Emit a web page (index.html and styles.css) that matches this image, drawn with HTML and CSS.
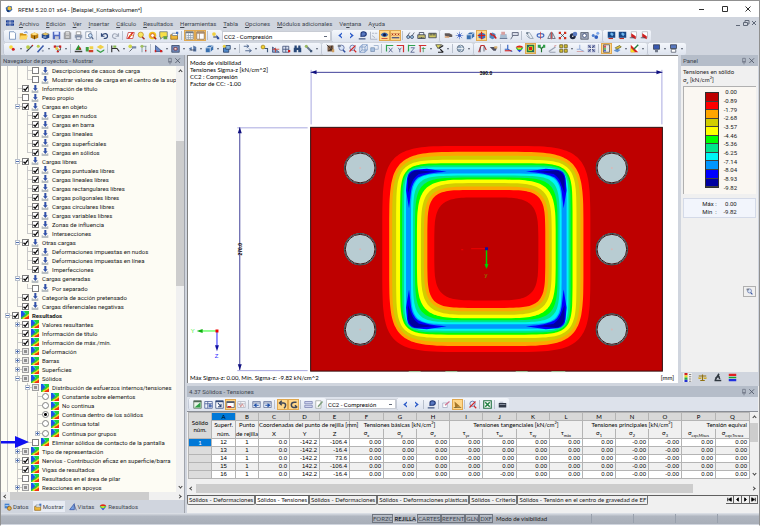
FILE: index.html
```
<!DOCTYPE html>
<html lang="es">
<head>
    <meta charset="UTF-8">
    <meta name="viewport" content="width=device-width, initial-scale=1.0">
    <title>RFEM 5.20.01 x64 - [Beispiel_Kontakvolumen*]</title>
    <link rel="stylesheet" href="styles.css">
</head>
<body>
    <div class="window">
        <header class="titlebar">
            <span class="icon" data-icon="app"></span>
            <h1 class="title">RFEM 5.20.01 x64 - [Beispiel_Kontakvolumen*]</h1>
            <div class="window-buttons">
                <button aria-label="Minimizar"><svg viewBox="0 0 8 8"><path d="M1 4.500h5"/></svg></button>
                <button aria-label="Maximizar"><svg viewBox="0 0 8 8"><path d="M1.500 1.500h5v5h-5z"/></svg></button>
                <button aria-label="Cerrar"><svg viewBox="0 0 8 8"><path d="M1.500 1.500l5 5M6.500 1.500l-5 5"/></svg></button>
            </div>
        </header>

        <nav class="menubar">
            <span class="icon" data-icon="flag"></span>
            <button><u>A</u>rchivo</button>
            <button><u>E</u>dición</button>
            <button><u>V</u>er</button>
            <button><u>I</u>nsertar</button>
            <button><u>C</u>álculo</button>
            <button><u>R</u>esultados</button>
            <button><u>H</u>erramientas</button>
            <button><u>T</u>abla</button>
            <button><u>O</u>pciones</button>
            <button><u>M</u>ódulos adicionales</button>
            <button>Ve<u>n</u>tana</button>
            <button>A<u>y</u>uda</button>
            <div class="mdi-buttons">
                <button aria-label="Minimizar documento"><svg viewBox="0 0 8 8"><path d="M2 6.500h4"/></svg></button>
                <button aria-label="Restaurar documento"><svg viewBox="0 0 8 8"><path d="M1.500 3.500h4v3h-4zM3 3v-1.500h4v3.500h-1"/></svg></button>
                <button aria-label="Cerrar documento"><svg viewBox="0 0 8 8"><path d="M2 2l4 4M6 2l-4 4"/></svg></button>
            </div>
        </nav>

        <div class="toolbar-row">
            <div class="toolbar" data-tools="new open cube box save doc print preview | undo redo | pencil zoom target tip folder | *grid *pane | loadcase"></div>
            <select class="case-select" aria-label="Caso de carga"><option>CC2 - Compresión</option></select>
            <div class="toolbar" data-tools="prev next query dims *eye *xxx | glasses ruler ruler2"></div>
            <div class="toolbar" data-tools="hand star solid *solidred cubered support sign | copy mirror flip cross sphere camera balls"></div>
            <div class="toolbar" data-tools="mod mod pdf pdf"></div>
        </div>
        <div class="toolbar-row">
            <div class="toolbar" data-tools="node. line member. nodes. | tree people layers | frame. tag section | mesh. opening. rod. solid. clip. | arrowsx. key table meshred binoc wrench."></div>
            <div class="toolbar" data-tools="tiger zoomin zoomred wire wire2 | axisx axisy axisz axisall. diag. | orb."></div>
            <div class="toolbar" data-tools="curve mask | axes rainbow *result plant plane eggs. axes2 quad | *legend paint. chart."></div>
            <div class="toolbar" data-tools="screen. screen2."></div>
        </div>

        <main class="workspace">
            <aside class="navigator">
                <div class="dock-header">
                    <h2>Navegador de proyectos - Mostrar</h2>
                    <button aria-label="Fijar" data-icon="pin"></button>
                    <button aria-label="Cerrar navegador" data-icon="close"></button>
                </div>
                <div class="tree-area">
                    <ul class="tree" id="tree"></ul>
                    <div class="scroll-v nav-scroll">
                        <span class="arrow-up"></span>
                        <span class="thumb"></span>
                        <span class="arrow-down"></span>
                    </div>
                </div>
                <div class="scroll-h nav-scroll-h">
                    <span class="arrow-left"></span>
                    <span class="thumb"></span>
                    <span class="arrow-right"></span>
                </div>
                <div class="nav-tabs">
                    <button><span class="icon" data-icon="tabdata"></span>Datos</button>
                    <button class="active"><span class="icon" data-icon="folder"></span>Mostrar</button>
                    <button><span class="icon" data-icon="tabview"></span>Vistas</button>
                    <button><span class="icon" data-icon="rainbow"></span>Resultados</button>
                </div>
                <svg class="pointer" viewBox="0 0 28 12"><path d="M0 5h14V0l14 6-14 6V7.500H0z" fill="#1010f0"/></svg>
            </aside>

            <section class="main">
                <div class="upper">
                    <div class="viewport">
                        <svg class="model" id="model" viewBox="187 55 491 330" role="img" aria-label="Tensiones Sigma-z">
                            <rect x="309" y="127" width="355" height="246" fill="#be0000" stroke="#301010"/>
                            <g id="contours"></g>
                            <g id="holes"></g>
                            <g stroke="#a8a8e0" fill="none">
                                <path d="M309.500 69v55M663.500 69v55M235 127.500h71M235 372.500h71"/>
                            </g>
                            <g stroke="#404098" fill="none">
                                <path d="M309 71.500h355M237.500 127v245"/>
                            </g>
                            <g fill="#101080">
                                <path d="M309 71.500l6-2v4zM664 71.500l-6-2v4zM237.500 127l-2 6h4zM237.500 372l-2-6h4z"/>
                            </g>
                            <text x="486" y="74" class="dim">390.0</text>
                            <text x="0" y="0" class="dim" transform="translate(240 250) rotate(-90)">270.0</text>
                            <path d="M408 373.500h12M445 373.500h12M516 373.500h12M552 373.500h14" stroke="#a0c8a0"/>
                            <!-- origin axes -->
                            <path d="M471 249.500h15" stroke="#f00000"/>
                            <path d="M461 250.500h2" stroke="#f00000"/>
                            <path d="M486.500 250v18" stroke="#00d000" stroke-width="1.500"/>
                            <path d="M484.500 265h4l-2 5z" fill="#00d000"/>
                            <path d="M485 248h3v3h-3z" fill="#1010a0"/>
                            <text x="486" y="278" class="axis" fill="#70a000">y</text>
                            <!-- view axes -->
                            <path d="M198 332.500h17" stroke="#20ff20"/>
                            <path d="M194 332.500l6-2v4z" fill="#10b010"/>
                            <path d="M214.500 333v15" stroke="#2020ff"/>
                            <path d="M214.500 353l-2-6h4z" fill="#1010a0"/>
                            <path d="M213 331h3v3h-3z" fill="#f00000"/>
                            <text x="190" y="335" class="axis" fill="#40f040">Y</text>
                            <text x="214" y="360" class="axis" fill="#3030ff">Z</text>
                        </svg>
                        <div class="model-info">
                            <p>Modo de visibilidad</p>
                            <p>Tensiones Sigma-z [kN/cm^2]</p>
                            <p>CC2 : Compresión</p>
                            <p>Factor de CC: -1.00</p>
                        </div>
                        <div class="model-footer">
                            <span>Máx Sigma-z: 0.00, Mín. Sigma-z: -9.82 kN/cm^2</span>
                            <span>[mm]</span>
                        </div>
                    </div>

                    <aside class="panel">
                        <div class="dock-header">
                            <h2>Panel</h2>
                            <button aria-label="Fijar panel" data-icon="pin"></button>
                            <button aria-label="Cerrar panel" data-icon="close"></button>
                        </div>
                        <div class="panel-body">
                            <p class="panel-title">Tensiones en sólido<br>σ<sub>z</sub> [kN/cm<sup>2</sup>]</p>
                            <div class="legend">
                                <div class="legend-colors" id="legend-colors"></div>
                                <ul class="legend-values" id="legend-values"></ul>
                            </div>
                            <dl class="extremes">
                                <dt>Máx :</dt><dd>0.00</dd>
                                <dt>Mín &nbsp;:</dt><dd>-9.82</dd>
                            </dl>
                            <button class="panel-zoom" aria-label="Opciones" data-icon="zoomin"></button>
                        </div>
                        <div class="panel-tabs">
                            <button class="active" aria-label="Escala" data-icon="scale"></button>
                            <button aria-label="Factores" data-icon="balance"></button>
                            <button aria-label="Filtro" data-icon="micro"></button>
                            <button aria-label="Colores" data-icon="bars"></button>
                        </div>
                    </aside>
                </div>

                <section class="results">
                    <div class="dock-header">
                        <h2>4.37 Sólidos - Tensiones</h2>
                        <button aria-label="Fijar tabla" data-icon="pin"></button>
                        <button aria-label="Cerrar tabla" data-icon="close"></button>
                    </div>
                    <div class="results-tools">
                        <div class="toolbar" data-tools="sheet addrow sheetin *sheetred sheetx | tleft tright | *back *forth | lines edit"></div>
                        <select class="case-select small" aria-label="Caso de carga de la tabla"><option>CC2 - Compresión</option></select>
                        <div class="toolbar" data-tools="prev next | query | clip2 *pick | zoomred | excel | cam"></div>
                    </div>
                    <div class="grid-area">
                        <table class="grid">
                            <colgroup id="cols"></colgroup>
                            <thead id="grid-head"></thead>
                            <tbody id="grid-body"></tbody>
                        </table>
                        <div class="scroll-v grid-scroll">
                            <span class="arrow-up"></span>
                            <span class="thumb"></span>
                            <span class="arrow-down"></span>
                        </div>
                    </div>
                    <div class="scroll-h grid-scroll-h">
                        <span class="arrow-left"></span>
                        <span class="thumb"></span>
                        <span class="arrow-right"></span>
                    </div>
                    <div class="sheet-tabs">
                        <button>Sólidos - Deformaciones</button>
                        <button class="active">Sólidos - Tensiones</button>
                        <button>Sólidos - Deformaciones</button>
                        <button>Sólidos - Deformaciones plásticas</button>
                        <button>Sólidos - Criterio</button>
                        <button>Sólidos - Tensión en el centro de gravedad de EF</button>
                        <div class="sheet-nav">
                            <button aria-label="Primera"><svg viewBox="0 0 8 8"><path d="M2 2v4M6 2L3 4l3 2z"/></svg></button>
                            <button aria-label="Anterior"><svg viewBox="0 0 8 8"><path d="M5 2L3 4l2 2z"/></svg></button>
                            <button aria-label="Siguiente"><svg viewBox="0 0 8 8"><path d="M3 2l2 2-2 2z"/></svg></button>
                            <button aria-label="Última"><svg viewBox="0 0 8 8"><path d="M6 2v4M2 2l3 2-3 2z"/></svg></button>
                        </div>
                    </div>
                </section>
            </section>
        </main>

        <footer class="statusbar">
            <button>FORZC</button>
            <button class="on">REJILLA</button>
            <button>CARTES</button>
            <button>REFENT</button>
            <button>GLN</button>
            <button>DXF</button>
            <span class="status-text">Modo de visibilidad</span>
            <span class="cell"></span>
            <span class="cell"></span>
            <span class="cell"></span>
            <span class="cell"></span>
        </footer>
    </div>
    <script src="script.js"></script>
</body>
</html>
```
FILE: styles.css
```
:root {
    --ui-font: Roboto, "Open Sans", sans-serif;
    --grid-font: Lato, "Liberation Sans", sans-serif;
    --frame: #d0d5de;
    --dock: #b5bdc9;
    --line: #a0a4ac;
    --text: #202020;
}

* {
    margin: 0;
    padding: 0;
    box-sizing: border-box;
}

body {
    font-family: var(--ui-font);
    font-size: 6px;
    line-height: 9px;
    color: var(--text);
    background: #ffffff;
}

button,
select {
    font: inherit;
    color: inherit;
    background: none;
    border: 0;
}

svg {
    display: block;
}

ul {
    list-style: none;
}

h1,
h2 {
    font-size: inherit;
    font-weight: normal;
}

.window {
    display: flex;
    flex-direction: column;
    height: 100vh;
    padding-bottom: 1px;
    background: var(--frame);
    border-top: 1px solid #909090;
    border-right: 1px solid #909090;
    border-left: 1px solid #909090;
    border-bottom: 1px solid #ffffff;
    overflow: hidden;
}

/* title and menu */
.titlebar {
    display: flex;
    align-items: center;
    gap: 5px;
    height: 16px;
    padding: 0 3px 0 4px;
    background: #ffffff;
    flex: none;
}

.icon {
    display: block;
    width: 8px;
    height: 8px;
    flex: none;
}

.icon svg,
[data-icon] > svg {
    width: 100%;
    height: 100%;
}

.window-buttons {
    display: flex;
    gap: 15px;
    margin-left: auto;
    padding-right: 4px;
}

.window-buttons svg,
.mdi-buttons svg {
    width: 8px;
    height: 8px;
    fill: none;
    stroke: #303030;
}

.mdi-buttons svg {
    stroke: #606878;
}

.menubar {
    display: flex;
    align-items: center;
    gap: 7px;
    height: 12px;
    padding-left: 5px;
    color: #404650;
    flex: none;
}

.menubar > .icon {
    margin-right: -2px;
}

.mdi-buttons {
    display: flex;
    margin-left: auto;
    padding-right: 1px;
}

/* toolbars */
.toolbar-row {
    display: flex;
    align-items: center;
    height: 13px;
    padding-left: 2px;
    flex: none;
}

.toolbar {
    display: flex;
    align-items: center;
    height: 12px;
    padding: 0 1px 0 3px;
    background: linear-gradient(#f4f7fc, #dde3ee);
    border-left: 1px dotted #a0a8b8;
    border-radius: 2px;
}

.tool {
    display: flex;
    align-items: center;
    justify-content: center;
    width: 11px;
    height: 11px;
}

.tool svg {
    width: 9px;
    height: 9px;
}

.tool.on {
    background: #ffd78a;
    outline: 1px solid #e0a850;
    outline-offset: -1px;
}

.tool-drop {
    width: 6px;
    height: 11px;
    display: flex;
    align-items: center;
    justify-content: center;
}

.tool-drop::before {
    content: "";
    border: 1px solid transparent;
    border-top: 2px solid #505868;
    border-bottom: 0;
}

.tool-sep {
    width: 1px;
    height: 9px;
    margin: 0 2px 0 1px;
    background: #b8c0cc;
}

.case-select {
    width: 109px;
    height: 10px;
    padding: 0 8px 0 1px;
    background: linear-gradient(#606878, #606878) calc(100% - 3px) 4px / 3px 1px no-repeat #ffffff;
    border: 1px solid #c8ccd4;
    appearance: none;
    color: #000000;
}

.case-select.small {
    width: 70px;
}

/* docks */
.workspace {
    display: grid;
    grid-template-columns: 184px 1fr;
    gap: 2px;
    flex: 1;
    min-height: 0;
}

.dock-header {
    display: flex;
    align-items: center;
    height: 11px;
    padding: 0 2px;
    background: var(--dock);
    color: #404650;
    flex: none;
}

.dock-header h2 {
    flex: 1;
}

.dock-header button {
    width: 8px;
    height: 8px;
}

.navigator {
    position: relative;
    display: flex;
    flex-direction: column;
    min-height: 0;
    background: #fdfcf4;
    border-right: 1px solid var(--line);
}

.tree-area {
    display: flex;
    flex: 1;
    min-height: 0;
}

.tree {
    display: flex;
    flex-direction: column;
    flex: 1;
    min-width: 0;
    padding-left: 1px;
    overflow: hidden;
}

.tree-row {
    display: flex;
    align-items: center;
    flex: 1;
    min-height: 0;
    white-space: nowrap;
}

.guide {
    position: relative;
    width: 10px;
    align-self: stretch;
    flex: none;
}

.guide.line,
.guide.branch {
    background: linear-gradient(#c8c8c8, #c8c8c8) 5px 0 / 1px 100% no-repeat;
}

.guide.branch {
    background:
        linear-gradient(#c8c8c8, #c8c8c8) 5px 0 / 1px 100% no-repeat,
        linear-gradient(#c8c8c8, #c8c8c8) 5px 4px / 5px 1px no-repeat;
}

.guide.last {
    background:
        linear-gradient(#c8c8c8, #c8c8c8) 5px 0 / 1px 5px no-repeat,
        linear-gradient(#c8c8c8, #c8c8c8) 5px 4px / 5px 1px no-repeat;
}

/* expander box sits on top of the guide line */
.expander {
    position: absolute;
    left: 3px;
    top: 2px;
    width: 5px;
    height: 5px;
    border: 1px solid #b8c0cc;
    background: linear-gradient(#5070b0, #5070b0) center / 3px 1px no-repeat #ffffff;
}

.expander.plus {
    background:
        linear-gradient(#5070b0, #5070b0) center / 3px 1px no-repeat,
        linear-gradient(#5070b0, #5070b0) center / 1px 3px no-repeat #ffffff;
}

.tree-row label {
    display: flex;
    align-items: center;
    gap: 2px;
}

.tree-row .icon {
    width: 8px;
    margin-right: 1px;
}

.tree-row input {
    appearance: none;
    width: 7px;
    height: 7px;
    border: 1px solid #808080;
    background: #ffffff;
    flex: none;
}

.tree-row input[type="checkbox"]:checked {
    background: #ffffff url("data:image/svg+xml,%3Csvg xmlns='http://www.w3.org/2000/svg' viewBox='0 0 6 6'%3E%3Cpath d='M1 3l1.500 1.500L5 1' fill='none' stroke='%23000' stroke-width='1.200'/%3E%3C/svg%3E") center / 6px 6px no-repeat;
}

.tree-row input.mixed {
    background: #909090;
    border-color: #a0a0a0;
    box-shadow: inset 0 0 0 1px #e8e8e8;
}

.tree-row input[type="radio"] {
    border-radius: 50%;
}

.tree-row input[type="radio"]:checked {
    background: radial-gradient(circle, #000000 0 1px, #ffffff 2px);
}

.tree-row.bold {
    font-weight: bold;
}

.scroll-v,
.scroll-h {
    display: flex;
    align-items: center;
    background: #f0f0f0;
    flex: none;
}

.scroll-v {
    flex-direction: column;
    width: 8px;
}

.scroll-h {
    height: 8px;
}

.thumb {
    background: #cdcdcd;
}

.scroll-v .thumb {
    width: 100%;
}

.scroll-h .thumb {
    height: 100%;
}

.arrow-up,
.arrow-down,
.arrow-left,
.arrow-right {
    width: 3px;
    height: 3px;
    margin: 4px 3px;
    border: solid #404040;
    border-width: 1px 0 0 1px;
    flex: none;
    transform: rotate(45deg);
}

.arrow-down {
    transform: rotate(225deg);
    margin-top: auto;
}

.arrow-left {
    transform: rotate(-45deg);
}

.arrow-right {
    transform: rotate(135deg);
    margin-left: auto;
}

.nav-scroll .thumb {
    height: 34%;
    margin-top: 64px;
}

.nav-scroll-h .thumb {
    width: 76%;
}

.nav-tabs {
    display: flex;
    align-items: center;
    gap: 3px;
    height: 13px;
    padding-left: 2px;
    background: var(--frame);
    color: #404650;
    flex: none;
}

.nav-tabs button {
    display: flex;
    align-items: center;
    gap: 1px;
    height: 11px;
    padding: 0 1px;
}

.nav-tabs .active {
    background: #e8ecf4;
}

.pointer {
    position: absolute;
    left: 0;
    bottom: 65px;
    width: 28px;
    height: 12px;
}

.main {
    display: flex;
    flex-direction: column;
    min-width: 0;
    min-height: 0;
}

.upper {
    display: grid;
    grid-template-columns: 1fr 77px;
    gap: 3px;
    flex: 1;
    min-height: 0;
    padding-right: 1px;
}

/* model view */
.viewport {
    position: relative;
    min-height: 0;
    background: #ffffff;
    border-top: 1px solid #808080;
    border-left: 1px solid #808080;
    font-family: var(--grid-font);
    color: #000000;
}

.model {
    position: absolute;
    width: 100%;
    height: 100%;
}

.model text {
    font-family: "Liberation Sans", sans-serif;
    font-size: 6px;
    text-anchor: middle;
}

.model .dim {
    font-size: 5px;
    font-weight: bold;
    fill: #000000;
}

.model-info {
    position: absolute;
    top: 3px;
    left: 2px;
    font-size: 6px;
    line-height: 7px;
}

.model-footer {
    position: absolute;
    right: 4px;
    bottom: 1px;
    left: 2px;
    display: flex;
    justify-content: space-between;
    font-size: 6px;
    line-height: 8px;
}

/* right panel */
.panel {
    display: flex;
    flex-direction: column;
    min-height: 0;
    background: #f0f0f0;
}

.panel-body {
    display: flex;
    flex-direction: column;
    flex: 1;
    padding: 2px;
    min-height: 0;
}

.panel-title {
    padding-bottom: 1px;
    font-family: var(--grid-font);
    line-height: 8px;
}

.panel-title sub,
.panel-title sup {
    font-size: 4px;
    line-height: 1;
}

.legend {
    display: flex;
    gap: 2px;
    height: 108px;
    padding: 5px 0 0 21px;
    background: #faf7f2;
    border-top: 1px solid #b0b0b0;
    border-left: 1px solid #b0b0b0;
}

.legend-colors {
    width: 14px;
    height: 96px;
    border: 1px solid #303030;
}

.legend-colors span {
    display: block;
    height: calc(100% / 11);
    border-bottom: 1px solid #404040;
}

.legend-values {
    width: 16px;
    height: 104px;
    margin-top: -4px;
    text-align: right;
    display: flex;
    flex-direction: column;
}

.legend-values li {
    flex: 1;
    line-height: 8px;
}

.extremes {
    display: grid;
    grid-template-columns: auto 20px;
    justify-content: center;
    margin: 4px 0 68px;
    padding: 1px 0;
    background: #f2f5fc;
    border: 1px solid #d4dae8;
    line-height: 8px;
}

.extremes dd {
    text-align: right;
}

.panel-zoom {
    width: 13px;
    height: 11px;
    padding: 1px 2px;
    align-self: flex-end;
    border: 1px solid #b0b0b0;
}

.panel-tabs {
    display: flex;
    gap: 6px;
    height: 11px;
    padding: 1px 2px;
    background: var(--frame);
    flex: none;
}

.panel-tabs button {
    width: 9px;
    height: 9px;
}

.panel-tabs .active {
    background: #f0f0f0;
}

/* result table */
.results {
    margin-top: 3px;
    padding-right: 1px;
    background: #f0f0f0;
    flex: none;
}

.results-tools {
    display: flex;
    align-items: center;
    height: 15px;
    padding-left: 1px;
    background: #dde2eb;
    border-bottom: 1px solid #8a8e96;
}

.grid-area {
    display: flex;
    padding-left: 1px;
}

.grid {
    flex: 1;
    width: 100%;
    min-width: 0;
    table-layout: fixed;
    border-collapse: collapse;
    font-family: "Liberation Sans", sans-serif;
    font-size: 6px;
    line-height: 7px;
    color: #000000;
}

.grid th,
.grid td {
    height: 8px;
    padding: 0;
    border: 1px solid #b4b4b4;
    white-space: nowrap;
    font-weight: normal;
    text-align: center;
}

.grid th {
    background: #f0f0f0;
    font-family: var(--grid-font);
}

.grid .letters th {
    background: #d8d8d8;
}

.grid .letters .current,
.grid tbody .current {
    background: #0078d7;
    color: #ffffff;
}

.grid .letters .current {
    color: #000000;
}

.grid .names th {
    height: 10px;
    border-top: 0;
}

.grid .groups th {
    border-bottom: 0;
}

.grid tbody th {
    background: #dcdcdc;
}

.grid td {
    background: #ffffff;
}

.grid tr:nth-child(even) td {
    background: #f0f0f0;
}

.grid .num {
    padding-right: 2px;
    text-align: right;
}

.grid sub,
.grid sup {
    font-size: 4px;
    line-height: 1;
}

.grid-scroll .thumb {
    height: 19px;
}

.grid-scroll-h {
    margin-top: 5px;
    height: 9px;
}

.grid-scroll-h .thumb {
    width: 87%;
}

.sheet-tabs {
    display: flex;
    align-items: flex-start;
    margin-top: 2px;
    height: 18px;
    border-top: 1px solid #606060;
    font-family: var(--grid-font);
}

.sheet-tabs > button {
    height: 9px;
    padding: 0 1px;
    border: 1px solid #707070;
    border-top: 0;
    border-radius: 0 0 2px 2px;
    line-height: 8px;
    white-space: nowrap;
}

.sheet-tabs > .active {
    background: #ffffff;
}

.sheet-nav {
    display: flex;
    margin-left: auto;
}

.sheet-nav button {
    border-right: 1px solid #606060;
    border-bottom: 1px solid #606060;
}

.sheet-nav svg {
    width: 7px;
    height: 7px;
    stroke: #000000;
}

/* status */
.statusbar {
    display: flex;
    align-items: center;
    height: 11px;
    padding-left: 371px;
    background: linear-gradient(#e0e4ea, #b0b6c0 30%, #a8aeb8);
    font-family: var(--grid-font);
    flex: none;
}

.statusbar button {
    height: 9px;
    border: 1px solid #707680;
    line-height: 7px;
    color: #404650;
}

.statusbar .on {
    color: #000000;
    border-color: #c8ccd4;
}

.status-text {
    width: 98px;
    padding-left: 3px;
    white-space: nowrap;
}

.cell {
    flex: 1;
    height: 9px;
    border-left: 1px solid #98a0ac;
}
```
FILE: script.js
```
// Small icon set, every icon is drawn on a 12x12 canvas
const ICONS = {
    app: '<path d="M1 4l4-3 5 1 1 5-4 4-5-2z" fill="#3a6ab0"/><path d="M4 3l3-1 3 3-2 3-4-1z" fill="#f0c030"/><path d="M3 7l3 1v3l-3-1z" fill="#183870"/>',
    flag: '<path d="M0 2h12v8H0z" fill="#1c3c90"/><path d="M0 6h12M6 2v8" stroke="#fff"/><path d="M2 4h2M8 4h2M2 8h2M8 8h2" stroke="#80a0e0"/>',
    pin: '<path d="M4 2h4v5H4zM3 7.500h6M6 8v3" fill="none" stroke="#606878"/>',
    close: '<path d="M2 2l7 7M9 2l-7 7" stroke="#505868" stroke-width="1.300"/>',
    new: '<path d="M2 1h6l2 2v8H2z" fill="#fff" stroke="#6080b0"/>',
    open: '<path d="M1 3h4l1 1h4v7H1z" fill="#d09010"/><path d="M2 6h10l-2 5H1z" fill="#ffd860"/><path d="M7 2l3-1 1 2" stroke="#3060b0" fill="none"/>',
    cube: '<path d="M1 4l5-2 5 2v5l-5 2-5-2z" fill="#c08010"/><path d="M1 4l5-2 5 2-5 2z" fill="#ffe080"/><path d="M6 6v5" stroke="#403000"/>',
    box: '<path d="M1 4l5-2 5 2v5l-5 2-5-2z" fill="#204890"/><path d="M1 4l5-2 5 2-5 2z" fill="#e0c060"/><path d="M3 8h4" stroke="#fff"/>',
    save: '<path d="M1 1h10v10H1z" fill="#5068c0"/><path d="M3 1h6v4H3z" fill="#e0e8ff"/><path d="M4 7h5v4H4z" fill="#c8c8d0"/>',
    doc: '<path d="M1 2h10v9H1z" fill="#a0a4ac"/><path d="M3 1h6v9H3z" fill="#eee" stroke="#808080"/><path d="M4 4h4M4 6h4M4 8h4" stroke="#909090"/>',
    print: '<path d="M3 1h6v4H3z" fill="#fff" stroke="#888"/><path d="M1 5h10v4H1z" fill="#909cb0"/><path d="M3 8h6v3H3z" fill="#fff" stroke="#607090"/>',
    preview: '<path d="M1 1h7v9H1z" fill="#fff" stroke="#8090a8"/><circle cx="7" cy="6" r="2.500" fill="#d0e8ff" stroke="#405880"/><path d="M9 8l2 3" stroke="#405880" stroke-width="1.500"/>',
    undo: '<path d="M2 3v4h4M2 7c3-5 8-4 8 0 0 2-2 3-5 3" fill="none" stroke="#304878" stroke-width="1.600"/>',
    redo: '<path d="M10 3v4H6M10 7c-3-5-8-4-8 0 0 2 2 3 5 3" fill="none" stroke="#a0a8b8" stroke-width="1.500"/>',
    pencil: '<path d="M3 2h8l-2 8H1z" fill="#fff" stroke="#c03030"/><path d="M3 10l6-8" stroke="#e03020" stroke-width="2"/><path d="M4 6h5" stroke="#e0a020"/>',
    zoom: '<circle cx="5" cy="5" r="3.500" fill="#f8e860" stroke="#c08820"/><path d="M7 8l3 3" stroke="#a03020" stroke-width="2"/>',
    target: '<circle cx="6" cy="6" r="5" fill="#f0c020"/><circle cx="6" cy="6" r="2.500" fill="#fff" stroke="#d05020"/><path d="M8 8l3 3" stroke="#b02020" stroke-width="2"/>',
    tip: '<path d="M1 1h10v7H5l-3 3V8H1z" fill="#f8e048" stroke="#607080"/><path d="M6 7h5v4H6z" fill="#60a040"/>',
    folder: '<path d="M1 5h9v6H1z" fill="#f0b838" stroke="#906010"/><path d="M3 3h7v3H3z" fill="#fff" stroke="#708090"/><path d="M8 1h3v3H8z" fill="#4070c0"/>',
    grid: '<path d="M1 1h10v10H1z" fill="#fff" stroke="#707880"/><path d="M1 2h10" stroke="#707880" stroke-width="2"/><path d="M4.500 3v8M7.500 3v8M2 6h9M2 8.500h9" stroke="#90a0b0"/>',
    pane: '<path d="M1 1h10v10H1z" fill="#fff" stroke="#806040"/><path d="M1 2.500h10" stroke="#a08060" stroke-width="2"/><path d="M4.500 3v8" stroke="#a08060"/>',
    loadcase: '<circle cx="4" cy="4" r="2.500" fill="#f0d040"/><path d="M3 8h6" stroke="#404858" stroke-width="1.500"/><path d="M7 5l4 4v2H8z" fill="#3050a0"/>',
    prev: '<path d="M8 2L3 6l5 4V8L6 6l2-2z" fill="#2858c8"/>',
    next: '<path d="M4 2l5 4-5 4V8l2-2-2-2z" fill="#2858c8"/>',
    query: '<path d="M4 8V4q0-3 3-3 4 0 4 3t-4 3H5" fill="#5878c0" stroke="#203878" stroke-width="1.500"/><path d="M1 10.500h9" stroke="#304878" stroke-width="1.500"/>',
    dims: '<path d="M2 1v10h9M4 3h3M8 3h3M4 6l4 3" stroke="#a0a8b8" fill="none"/>',
    eye: '<path d="M1 5c3-4 7-4 10 0-3 4-7 4-10 0z" fill="#3868b0"/><circle cx="6" cy="5" r="2" fill="#101840"/><path d="M2 10h8" stroke="#c03020"/>',
    xxx: '<path d="M1 3l2 3M3 3L1 6M5 3l2 3M7 3L5 6M9 3l2 3M11 3L9 6" stroke="#a02010"/><path d="M1 9h10" stroke="#304080" stroke-width="1.500"/>',
    glasses: '<path d="M1 8l4-6M7 8l4-6" stroke="#404858"/><circle cx="3" cy="8" r="2" fill="#a0c8e8" stroke="#304060"/><circle cx="8" cy="8" r="2" fill="#a0c8e8" stroke="#304060"/>',
    ruler: '<path d="M1 5h10v5H1z" fill="#c8c070" stroke="#303850"/><path d="M3 5V2h6v3M4 8v2M6 8v2M8 8v2" stroke="#303850" fill="none"/>',
    ruler2: '<path d="M1 3h10v6H1z" fill="#d0c860" stroke="#303850"/><path d="M3 3v3M5 3v3M7 3v3M9 3v3" stroke="#303850"/>',
    hand: '<path d="M1 3h6l4 2v3H5L1 6z" fill="#605858"/><path d="M1 8h6" stroke="#d8a070" stroke-width="2"/>',
    star: '<path d="M6 1v10M1 6h10M2.500 2.500l7 7M9.500 2.500l-7 7" stroke="#6888d0"/><circle cx="6" cy="6" r="2" fill="#4060c0"/>',
    solid: '<path d="M1 5l4-3h6v5l-4 4H1z" fill="#3870b0"/><path d="M1 5h6v6M7 5l4-3" stroke="#fff" fill="none"/>',
    solidred: '<path d="M2 4l4-2 5 2v5l-4 2-5-2z" fill="#4068b8"/><path d="M6 1v10M1 6h10" stroke="#d02020" stroke-width="1.500"/>',
    cubered: '<path d="M2 4l4-2 4 2v5l-4 2-4-2z" fill="#5088c0"/><path d="M7 5l4 5M3 3l3 3" stroke="#d02020" stroke-width="2"/>',
    support: '<path d="M2 4h8l1 6H1z" fill="#a8bcd0"/><path d="M3 1h5v4H3z" fill="#d8a0a0"/><path d="M1 10h10" stroke="#506080"/>',
    sign: '<path d="M3 2h8v4H3z" fill="#d8dce8" stroke="#485068"/><path d="M4 6l-3 5" stroke="#485068"/>',
    copy: '<path d="M2 2h4l5 8H7zM2 6l4 4" fill="none" stroke="#8898a8"/><circle cx="3" cy="3" r="1.500" fill="#708090"/>',
    mirror: '<ellipse cx="6" cy="6" rx="4.500" ry="2.500" fill="none" stroke="#4068c0" stroke-width="1.500"/><path d="M6 1v10" stroke="#d04040"/>',
    flip: '<path d="M5 2v8H1zM7 2v8h4z" fill="#e8e8f0" stroke="#505868"/><path d="M6 1v10" stroke="#d03030"/>',
    cross: '<path d="M2 2l8 8M10 2l-8 8" stroke="#404040"/><path d="M1 1h3v3H1zM8 1h3v3H8zM1 8h3v3H1zM8 8h3v3H8z" fill="#d03020"/>',
    sphere: '<circle cx="5" cy="7" r="4" fill="#202840"/><circle cx="8" cy="4" r="3" fill="#5878c0"/><circle cx="5" cy="7" r="1" fill="#fff"/>',
    camera: '<path d="M1 2h10v9H1z" fill="#a0a8b8" stroke="#505868"/><circle cx="6" cy="6" r="2.500" fill="#fff" stroke="#304070"/>',
    balls: '<circle cx="3" cy="6" r="2" fill="#5080d0"/><circle cx="7" cy="8" r="2.500" fill="#3060c0"/><circle cx="9" cy="3" r="2" fill="#80a8e8"/>',
    mod: '<path d="M1 1h10v8H1z" fill="#184888"/><path d="M4 4l2-2 3 2-2 3z" fill="#70b8f0"/><path d="M2 10h6" stroke="#c03020" stroke-width="1.500"/>',
    pdf: '<path d="M3 1h7v8H3z" fill="#fff" stroke="#b0b0b8"/><path d="M3 3l6 4v4L3 8z" fill="#d02020"/><path d="M1 9h6" stroke="#404858"/>',
    node: '<circle cx="4" cy="4" r="2.500" fill="#f8d840"/><circle cx="7" cy="7" r="2" fill="#d02020"/>',
    line: '<path d="M2 10l8-8" stroke="#404858" stroke-width="1.500"/><circle cx="4" cy="4" r="2.500" fill="#b8cc48"/><circle cx="10" cy="2" r="1" fill="#d02020"/>',
    member: '<path d="M2 11l8-9" stroke="#3858a8" stroke-width="2"/><circle cx="3" cy="3" r="2" fill="#b8cc48"/><circle cx="9" cy="9" r="1.500" fill="#a0a8b8"/>',
    nodes: '<path d="M2 3h8v5H6v3" fill="none" stroke="#484848"/><path d="M1 2h3v3H1zM8 2h3v3H8zM5 9h3v2H5z" fill="#d02020"/><circle cx="5" cy="6" r="2" fill="#e8c838"/>',
    tree: '<path d="M6 1l4 7H2z" fill="#309030"/><path d="M1 9h10v2H1z" fill="#404040"/><circle cx="8" cy="6" r="1.500" fill="#d03020"/>',
    people: '<path d="M1 4h4v6H1z" fill="#40a040"/><path d="M6 3h5v4H6z" fill="#f0d048"/><path d="M5 8h6v3H5z" fill="#d04028"/>',
    layers: '<path d="M1 4l5-3 5 3-5 3z" fill="#f0d048"/><path d="M1 7l5 3 5-3v2l-5 3-5-3z" fill="#38a048"/>',
    frame: '<path d="M1 2v9M1 6h7l3 4" fill="none" stroke="#303030" stroke-width="1.500"/><path d="M3 2h4v3H3z" fill="#88b850"/>',
    tag: '<circle cx="3" cy="3" r="2.500" fill="#d0d848"/><path d="M5 3h6v3H5z" fill="#7888a8"/><path d="M2 10l4-4" stroke="#404858"/>',
    section: '<path d="M2 3h8M4 3v8M9 3v8" stroke="#688088" fill="none"/><circle cx="4" cy="3" r="2" fill="#a0c060"/><circle cx="9" cy="9" r="1" fill="#d02020"/>',
    mesh: '<path d="M2 2v8h9z" fill="#6888c8" stroke="#304878"/><path d="M8 8h3v3H8zM1 8h2v3H1z" fill="#d02020"/>',
    opening: '<path d="M1 2h10v9H1z" fill="#7088b8" stroke="#304060"/><path d="M4 5h4v3H4z" fill="#fff" stroke="#802020"/>',
    rod: '<path d="M1 6l4-2v5zM7 2l4 2v6H7z" fill="#5878a8"/><path d="M2 8h8" stroke="#303850"/>',
    clip: '<path d="M2 5h7v6H2z" fill="#5088c8" stroke="#203860"/><path d="M5 2h6v5H5z" fill="#88b8e0" stroke="#203860"/><circle cx="3" cy="3" r="2" fill="#e8d040"/>',
    arrowsx: '<path d="M1 3h6M5 1l3 2-3 2M3 9h8M8 6l3 3-3 2" fill="none" stroke="#506890" stroke-width="1.300"/>',
    key: '<circle cx="4" cy="4" r="2.500" fill="#f0d030" stroke="#a08010"/><path d="M6 6h4v5" fill="none" stroke="#405878" stroke-width="1.500"/>',
    table: '<path d="M2 4v7h9z" fill="#90a8d0" stroke="#304878"/><path d="M2 7h9M6 5v6" stroke="#d03020"/>',
    meshred: '<path d="M1 3h8v8H1zM1 7h8M5 3v8" fill="#d8e0f0" stroke="#384870"/><path d="M8 8h3v3H8z" fill="#d02020"/>',
    binoc: '<path d="M2 2h3v3H2zM7 2h3v3H7zM1 5h4v6H1zM7 5h4v6H7zM5 5h2v3H5z" fill="#284878"/>',
    wrench: '<path d="M3 3l7 7" stroke="#687890" stroke-width="2.500"/><circle cx="3" cy="3" r="2" fill="#98b860"/><path d="M8 8h3v3H8z" fill="#405878"/>',
    tiger: '<path d="M2 2h8v8H2z" fill="#806048"/><path d="M1 1l4 4M8 2L6 8M3 9l6-2" stroke="#202020"/><path d="M8 7h3v4H8z" fill="#d0a060"/>',
    zoomin: '<circle cx="6" cy="5" r="3.500" fill="#d8e4f8" stroke="#506098"/><path d="M8 8l3 3" stroke="#3050a0" stroke-width="2"/><path d="M1 1h4v3H1z" fill="#788090"/>',
    zoomred: '<circle cx="6" cy="5" r="3.500" fill="#e0e8f8" stroke="#506098"/><path d="M2 10l8-8M8 8l3 3" stroke="#d02828" stroke-width="1.500"/>',
    wire: '<path d="M1 4h7v7H1zM4 1h7v7H4zM1 4l3-3M8 4l3-3M8 11l3-3M1 11l3-3" fill="none" stroke="#7090c0"/>',
    wire2: '<path d="M1 5h5v5H1z" fill="#a8c0e0" stroke="#7890b0"/><path d="M5 2h6v5H6" fill="none" stroke="#90a8c8"/>',
    axisx: '<path d="M2 1v9M2 2h9" stroke="#30a050" stroke-width="1.600" fill="none"/><path d="M5 5l5 6M10 5l-5 6" stroke="#405080"/>',
    axisy: '<path d="M1 2h9v9" stroke="#d03030" stroke-width="1.600" fill="none"/><path d="M3 5l2 3 2-3M5 8v3" stroke="#405080" fill="none"/>',
    axisz: '<path d="M2 1v9M2 2h9" stroke="#30a050" stroke-width="1.600" fill="none"/><path d="M5 5h5l-5 6h5" stroke="#405080" fill="none"/>',
    axisall: '<path d="M1 2h10M3 2v9" stroke="#d03030" stroke-width="1.500"/><path d="M5 6h5M7 4v7" stroke="#30904a"/>',
    diag: '<path d="M1 1h8l-5 5z" fill="#e8e060" stroke="#404040"/><path d="M5 6l6-4M7 7l4 4M4 11h7" stroke="#202020" stroke-width="1.500"/>',
    orb: '<circle cx="6" cy="6" r="4.500" fill="#90a8c0" stroke="#607080"/><path d="M2 6h8M6 2c3 2 3 6 0 8" fill="none" stroke="#fff"/>',
    curve: '<path d="M1 11L4 2h4l3 6" fill="none" stroke="#c03030" stroke-width="1.500"/><path d="M3 11V4M8 10V3" stroke="#404858"/>',
    mask: '<path d="M1 4h10l-2 5H6z" fill="#505060"/><path d="M7 3h4v3H7z" fill="#d8b070"/>',
    axes: '<path d="M5 1v6H1M5 7l6 3" fill="none" stroke="#3060c0" stroke-width="1.500"/><path d="M1 9h9" stroke="#d02828" stroke-width="1.500"/>',
    axes2: '<path d="M5 1v6H1M5 7l6 3" fill="none" stroke="#7898d0"/><path d="M1 10h9" stroke="#d09090"/>',
    rainbow: '<path d="M1 5c1-4 9-4 10 0z" fill="#e02818"/><path d="M1 5h10l-2 3H3z" fill="#28c048"/><path d="M3 8h6l-3 3z" fill="#2848d8"/><path d="M3 5h5v2H4z" fill="#f0e020"/>',
    result: '<path d="M1 1h10v10H1z" fill="#208040"/><path d="M3 3h6v6H3z" fill="#e8e020"/><path d="M4 4h4v4H4z" fill="#d82020"/><path d="M1 1l4 4M11 11L8 8" stroke="#2030a0"/>',
    plant: '<path d="M6 11V5M6 6L2 3M6 6l4-4" stroke="#207030" stroke-width="1.500"/><path d="M1 1h4v4H1zM8 1h3v4H8z" fill="#30a048"/>',
    plane: '<path d="M1 10l9-6M2 11h8" stroke="#98a0b0" stroke-width="1.500"/><path d="M8 3l3-1" stroke="#d07070"/>',
    eggs: '<path d="M1 1h4v4H1zM7 1h4v4H7zM1 7h4v4H1zM7 7h4v4H7z" fill="#d8c030" stroke="#605820"/>',
    quad: '<path d="M1 1h10v10H1z" fill="#9098c0"/><path d="M2 2l8 8M10 2l-8 8" stroke="#304070"/><path d="M6 1v10M1 6h10" stroke="#fff"/>',
    legend: '<path d="M2 1h8v10H2z" fill="#e8e8e8" stroke="#505050"/><path d="M3 2h2v3H3z" fill="#d02020"/><path d="M3 5h2v3H3z" fill="#40b040"/><path d="M3 8h2v2H3z" fill="#2040d0"/>',
    paint: '<path d="M1 9l4-3 5 2-4 3z" fill="#6090d0"/><path d="M3 5l6-3 2 2-6 3z" fill="#e8c840" stroke="#606020"/>',
    chart: '<path d="M1 1h10v10H1z" fill="#fff"/><path d="M1 1v10h10z" fill="#d82020"/><path d="M1 5v6h6z" fill="#f0e020"/><path d="M5 7l6-6" stroke="#208040" stroke-width="2"/>',
    screen: '<path d="M2 1h8v6H2z" fill="#3858b0" stroke="#303848"/><path d="M4 8h4v3H4z" fill="#707888"/>',
    screen2: '<path d="M2 1h8v5H2z" fill="#5878c0" stroke="#303848"/><path d="M3 7h6v4H3z" fill="#fff" stroke="#505868"/>',
    tabdata: '<path d="M1 1h7v7H1z" fill="#4080d0"/><path d="M2 4h5" stroke="#fff"/><circle cx="8" cy="8" r="3" fill="#e8b040" stroke="#805010"/>',
    tabview: '<path d="M1 10L8 1v9z" fill="#78a0e0" stroke="#2848a0"/><path d="M8 3l3 8" stroke="#405080"/>',
    load: '<path d="M5 0h3v5h2L6.500 9 3 5h2z" fill="#3050a8"/><path d="M1 10.500h10" stroke="#607080" stroke-width="1.300"/><path d="M1 8.500h2M9 8.500h2" stroke="#a0a8b8"/>',
    color: '<path d="M0 0h12v12H0z" fill="#2050e8"/><path d="M3 0h9v12H9C9 8 6 8 6 5S3 3 3 0z" fill="#20d0e0"/><path d="M5 0h7v12c0-4-4-3-4-6S5 3 5 0z" fill="#20d040"/><path d="M0 12c0-5 3-3 4-5s4-2 8-5v10z" fill="#30c830"/><path d="M2 12c1-4 4-3 6-5s2-2 4-3v8z" fill="#f0e020"/><path d="M5 12c1-3 3-2 4-3s2-2 3-2v5z" fill="#f03018"/>',
    scale: '<path d="M2 0h4v3H2z" fill="#d02020"/><path d="M2 3h4v3H2z" fill="#e8d820"/><path d="M2 6h4v3H2z" fill="#20b040"/><path d="M2 9h4v3H2z" fill="#2030d0"/><path d="M8 2h3M8 5h3M8 8h3M8 11h3" stroke="#606060"/>',
    balance: '<path d="M1 4h10M6 2v8M3 10h6" stroke="#907010" stroke-width="1.500"/><path d="M0 6h5l-1 2H1zM7 6h5l-1 2H8z" fill="#d0a820"/>',
    micro: '<path d="M8 1L3 9M7 3l2 5M2 10h9" stroke="#303840" stroke-width="2"/><path d="M3 6l6-1" stroke="#303840"/>',
    bars: '<path d="M1 1h10v3H1z" fill="#e02020"/><path d="M1 5h10v2H1z" fill="#20a030"/><path d="M1 8h10v3H1z" fill="#2030e0"/>',
    sheet: '<path d="M1 1h10v10H1z" fill="#e8f4e8" stroke="#506858"/><path d="M2 10l8-7v7z" fill="#30a048"/><path d="M1 2h10" stroke="#506858" stroke-width="2"/>',
    addrow: '<path d="M1 2h10v9H1zM1 5h10M5 2v9" fill="#f0f4fc" stroke="#405890"/><path d="M8 5v5M6 8h5" stroke="#2048a0" stroke-width="1.500"/>',
    sheetin: '<path d="M1 1h10v10H1z" fill="#fff" stroke="#304878"/><path d="M1 2h10" stroke="#304878" stroke-width="2"/><path d="M4 4l4 5M8 5v4H4" stroke="#304878" fill="none" stroke-width="1.500"/>',
    sheetred: '<path d="M1 2h10v8H1z" fill="#fff" stroke="#505868"/><path d="M1 3h10" stroke="#505868" stroke-width="2"/><path d="M2 9h5" stroke="#d02020" stroke-width="2"/>',
    sheetx: '<path d="M1 2h10v8H1zM1 5h10M5 2v8" fill="#f4f4f8" stroke="#b0b4c0"/><path d="M3 5l2 4 2-4 2 4" stroke="#d08080" fill="none"/>',
    tleft: '<path d="M1 2h10v8H1zM1 4h10" fill="#e8eef8" stroke="#607098"/><path d="M9 7H4M6 5L3 7l3 2" stroke="#2050a8" stroke-width="1.500" fill="none"/>',
    tright: '<path d="M1 2h10v8H1zM1 4h10" fill="#e8eef8" stroke="#607098"/><path d="M3 7h5M6 5l3 2-3 2" stroke="#2050a8" stroke-width="1.500" fill="none"/>',
    back: '<path d="M2 4h5c4 0 4 5 1 7M5 1L2 4l3 3" fill="none" stroke="#404858" stroke-width="2"/>',
    forth: '<path d="M10 3H7C2 3 2 9 6 10h4M8 7l3 3" fill="none" stroke="#404858" stroke-width="2"/>',
    lines: '<path d="M1 2h10v3H1zM1 7h10v3H1z" fill="#d0d4f0" stroke="#7880b0"/>',
    edit: '<path d="M1 1h7v10H1z" fill="#fff" stroke="#a0a8a0"/><path d="M4 9l6-7" stroke="#80a080" stroke-width="2"/>',
    clip2: '<path d="M1 4h6v6H1z" fill="#fff" stroke="#a0a8c0"/><path d="M4 7l6-5" stroke="#d07090" stroke-width="1.500"/>',
    pick: '<path d="M2 2l8 7H6l-3 2z" fill="#a87828"/><path d="M1 10h10" stroke="#706030"/>',
    excel: '<path d="M1 1h10v10H1z" fill="#fff" stroke="#207040" stroke-width="1.500"/><path d="M3 3l6 6M9 3L3 9" stroke="#208040" stroke-width="2"/>',
    cam: '<path d="M1 4h10v6H1z" fill="#303848"/><path d="M2 3h5M2 6h8" stroke="#a0a8b8"/>'
};

const COLORS = ['#be0000', '#ff0000', '#ffa500', '#d2cd00', '#ffff00', '#00ff00', '#00e68c', '#00f5f5', '#0096ff', '#0000ff', '#0000a0'];
const VALUES = ['0.00', '-0.89', '-1.79', '-2.68', '-3.57', '-4.46', '-5.36', '-6.25', '-7.14', '-8.04', '-8.93', '-9.82'];

// level, text, state (1 on, 0 off, m mixed, r radio, R radio on), expander, icon
const TREE = [
    [3, 'Descripciones de casos de carga', '0', '', 'load'],
    [3, 'Mostrar valores de carga en el centro de la sup', '0', '', 'load'],
    [2, 'Información de título', '1', '', 'load'],
    [2, 'Peso propio', '0', '', 'load'],
    [2, 'Cargas en objeto', '1', '-', 'load'],
    [3, 'Cargas en nudos', '1', '', 'load'],
    [3, 'Cargas en barra', '1', '', 'load'],
    [3, 'Cargas lineales', '1', '', 'load'],
    [3, 'Cargas superficiales', '1', '', 'load'],
    [3, 'Cargas en sólidos', '1', '', 'load'],
    [2, 'Cargas libres', '1', '-', 'load'],
    [3, 'Cargas puntuales libres', '1', '', 'load'],
    [3, 'Cargas lineales libres', '1', '', 'load'],
    [3, 'Cargas rectangulares libres', '1', '', 'load'],
    [3, 'Cargas poligonales libres', '1', '', 'load'],
    [3, 'Cargas circulares libres', '1', '', 'load'],
    [3, 'Cargas variables libres', '1', '', 'load'],
    [3, 'Zonas de influencia', '1', '', 'load'],
    [3, 'Intersecciones', '1', '', 'load'],
    [2, 'Otras cargas', '1', '-', 'load'],
    [3, 'Deformaciones impuestas en nudos', '1', '', 'load'],
    [3, 'Deformaciones impuestas en línea', '1', '', 'load'],
    [3, 'Imperfecciones', '1', '', 'load'],
    [2, 'Cargas generadas', '1', '-', 'load'],
    [3, 'Por separado', '0', '', 'load'],
    [2, 'Categoría de acción pretensado', '1', '', 'load'],
    [2, 'Cargas diferenciales negativas', '1', '', 'load'],
    [1, 'Resultados', '1', '-', 'color'],
    [2, 'Valores resultantes', '1', '+', 'color'],
    [2, 'Información de título', '1', '', 'color'],
    [2, 'Información de máx./mín.', '1', '', 'color'],
    [2, 'Deformación', 'm', '+', 'color'],
    [2, 'Barras', 'm', '+', 'color'],
    [2, 'Superficies', 'm', '+', 'color'],
    [2, 'Sólidos', 'm', '-', 'color'],
    [3, 'Distribución de esfuerzos internos/tensiones', 'm', '-', 'color'],
    [4, 'Constante sobre elementos', 'r', '', 'color'],
    [4, 'No continua', 'r', '', 'color'],
    [4, 'Continua dentro de los sólidos', 'R', '', 'color'],
    [4, 'Continua total', 'r', '', 'color'],
    [4, 'Continua por grupos', 'r', '+', 'color'],
    [3, 'Eliminar sólidos de contacto de la pantalla', '0', '', 'color'],
    [2, 'Tipo de representación', 'm', '+', 'color'],
    [2, 'Nervios - Contribución eficaz en superficie/barra', '1', '+', 'color'],
    [2, 'Vigas de resultados', '1', '', 'color'],
    [2, 'Resultados en el área de pilar', '0', '', 'color'],
    [2, 'Reacciones en apoyos', 'm', '+', 'color']
];

function icon(name) {
    return `<svg viewBox="0 0 12 12" aria-hidden="true">${ICONS[name]}</svg>`;
}

// Fill toolbars: "*" = pressed, "." = has a drop arrow, "|" = separator
function renderToolbars() {
    document.querySelectorAll('[data-tools]').forEach(bar => {
        bar.innerHTML = bar.dataset.tools.split(' ').map(tool => {
            if (tool === '|') return '<span class="tool-sep"></span>';
            const name = tool.replace(/[*.]/g, '');
            const on = tool.startsWith('*') ? ' on' : '';
            const drop = tool.endsWith('.') ? `<button class="tool-drop" aria-label="${name}, más"></button>` : '';
            return `<button class="tool${on}" aria-label="${name}">${icon(name)}</button>${drop}`;
        }).join('');
    });
    document.querySelectorAll('[data-icon]').forEach(el => {
        el.innerHTML = icon(el.dataset.icon);
    });
}

// True when another row of this level follows inside the same parent
function continues(index, level) {
    for (let i = index + 1; i < TREE.length; i++) {
        if (TREE[i][0] < level) return false;
        if (TREE[i][0] === level) return true;
    }
    return level < 3;
}

function renderTree() {
    const tree = document.getElementById('tree');
    tree.innerHTML = TREE.map(([level, text, state, expander, name], i) => {
        let guides = '';
        for (let l = 1; l < level; l++) {
            guides += `<span class="guide${continues(i, l) ? ' line' : ''}"></span>`;
        }
        const box = expander ? `<span class="expander${expander === '+' ? ' plus' : ''}"></span>` : '';
        guides += `<span class="guide ${continues(i, level) ? 'branch' : 'last'}">${box}</span>`;
        const radio = state.toLowerCase() === 'r';
        const checked = state === '1' || state === 'R' ? ' checked' : '';
        return `<li class="tree-row${level === 1 ? ' bold' : ''}">${guides}<label>
            <input type="${radio ? 'radio' : 'checkbox'}"${radio ? ' name="dist"' : ''}${state === 'm' ? ' class="mixed"' : ''}${checked}>
            <span class="icon">${icon(name)}</span>${text}</label></li>`;
    }).join('');
}

function renderLegend() {
    document.getElementById('legend-colors').innerHTML =
        COLORS.map(c => `<span style="background:${c}"></span>`).join('');
    document.getElementById('legend-values').innerHTML =
        VALUES.map(v => `<li>${v}</li>`).join('');
}

// Superellipse around the middle of the plate
function contour(a, b, n) {
    const points = [];
    for (let i = 0; i < 160; i++) {
        const t = i / 160 * Math.PI * 2;
        const c = Math.cos(t);
        const s = Math.sin(t);
        const x = 486.3 + a * Math.sign(c) * Math.pow(Math.abs(c), 2 / n);
        const y = 249.7 + b * Math.sign(s) * Math.pow(Math.abs(s), 2 / n);
        points.push(`${x.toFixed(1)},${y.toFixed(1)}`);
    }
    return points.join(' ');
}

function renderModel() {
    // colour index, half width, half height, exponent
    const rings = [
        [1, 105, 104, 5.5], [2, 98, 98, 5.5], [3, 95, 94, 6], [4, 91, 90, 7],
        [5, 87, 86.5, 8], [6, 85, 84.5, 9], [7, 83, 82.5, 10], [8, 81, 80.5, 11],
        [7, 76, 76, 8], [6, 74, 74, 7], [5, 72, 72, 6], [4, 70, 70, 5],
        [3, 66, 66.5, 5], [2, 63, 63, 5], [1, 59.5, 59.5, 5.5], [0, 52.5, 52, 4.5]
    ];
    let html = rings.map(([c, a, b, n]) => `<polygon points="${contour(a, b, n)}" fill="${COLORS[c]}"/>`).join('');
    // deep compression in the four corners
    [[1, 1], [-1, 1], [1, -1], [-1, -1]].forEach(([sx, sy]) => {
        html += `<g transform="translate(486.3 249.700) scale(${sx} ${sy})">
            <path d="M-40-78l-20-3-12 1q-7 1-8 9l-1 12 3 18 2-17q1-9 7-14 8-5 29-6z" fill="#0000ff"/>
            <path d="M-52-78l-18-1.500q-8 1-9 9v14l3-8q2-7 8-11z" fill="#0000a0"/></g>`;
    });
    document.getElementById('contours').innerHTML = html;

    let holes = '';
    [359, 613].forEach(x => [168, 250, 331].forEach(y => {
        holes += `<circle cx="${x}" cy="${y}" r="16" fill="#b8ccd2" stroke="#2c5054"/>
            <circle cx="${x}" cy="${y}" r="15" fill="none" stroke="#401010" stroke-width="1"/>
            <circle cx="${x}" cy="${y}" r="1" fill="#d8b8b8"/>`;
    }));
    document.getElementById('holes').innerHTML = holes;
}

function renderGrid() {
    const widths = [23, 24, 23, 31, 30, 30, 34, 33, 33, 33, 34, 33, 33, 33, 33, 33, 34, 34];
    const letters = 'ABCDEFGHIJKLMNOPQ'.split('');
    const names = ['núm.', 'de rejilla', 'X', 'Y', 'Z', 'σ<sub>x</sub>', 'σ<sub>y</sub>', 'σ<sub>z</sub>',
        'τ<sub>yz</sub>', 'τ<sub>xz</sub>', 'τ<sub>xy</sub>', 'τ<sub>máx</sub>', 'σ<sub>1</sub>', 'σ<sub>2</sub>', 'σ<sub>3</sub>',
        'σ<sub>eqv,Mises</sub>', 'σ<sub>eqv,Tresca</sub>'];
    const rows = [
        ['1', '12', '-142.2', '-106.4', '0.00', '0.00'],
        ['', '13', '-142.2', '-16.4', '0.00', '0.00'],
        ['', '14', '-142.2', '73.6', '-0.00', '0.00'],
        ['', '15', '142.2', '-106.4', '0.00', '0.00'],
        ['', '16', '142.2', '-16.4', '0.00', '-0.00']
    ];

    document.getElementById('cols').innerHTML = widths.map(w => `<col style="width:${w}px">`).join('');
    document.getElementById('grid-head').innerHTML = `
        <tr class="letters"><th rowspan="3">Sólido<br>núm.</th>${letters.map((l, i) => `<th${i ? '' : ' class="current"'}>${l}</th>`).join('')}</tr>
        <tr class="groups"><th>Superf.</th><th>Punto</th><th colspan="3">Coordenadas del punto de rejilla [mm]</th>
            <th colspan="3">Tensiones básicas [kN/cm<sup>2</sup>]</th><th colspan="4">Tensiones tangenciales [kN/cm<sup>2</sup>]</th>
            <th colspan="3">Tensiones principales [kN/cm<sup>2</sup>]</th><th colspan="2" class="num">Tensión equival</th></tr>
        <tr class="names">${names.map(n => `<th>${n}</th>`).join('')}</tr>`;
    document.getElementById('grid-body').innerHTML = rows.map(([solid, surf, y, z, yz, xz]) => {
        const nums = ['0.0', y, z, '0.00', '0.00', '0.00', yz, xz, '0.00', '0.00', '0.00', '-0.00', '-0.00', '0.00', '0.00'];
        return `<tr><th${solid ? ' class="current"' : ''}>${solid}</th><td>${surf}</td><td>1</td>
            ${nums.map(n => `<td class="num">${n}</td>`).join('')}</tr>`;
    }).join('');
}

renderToolbars();
renderTree();
renderLegend();
renderModel();
renderGrid();
```
